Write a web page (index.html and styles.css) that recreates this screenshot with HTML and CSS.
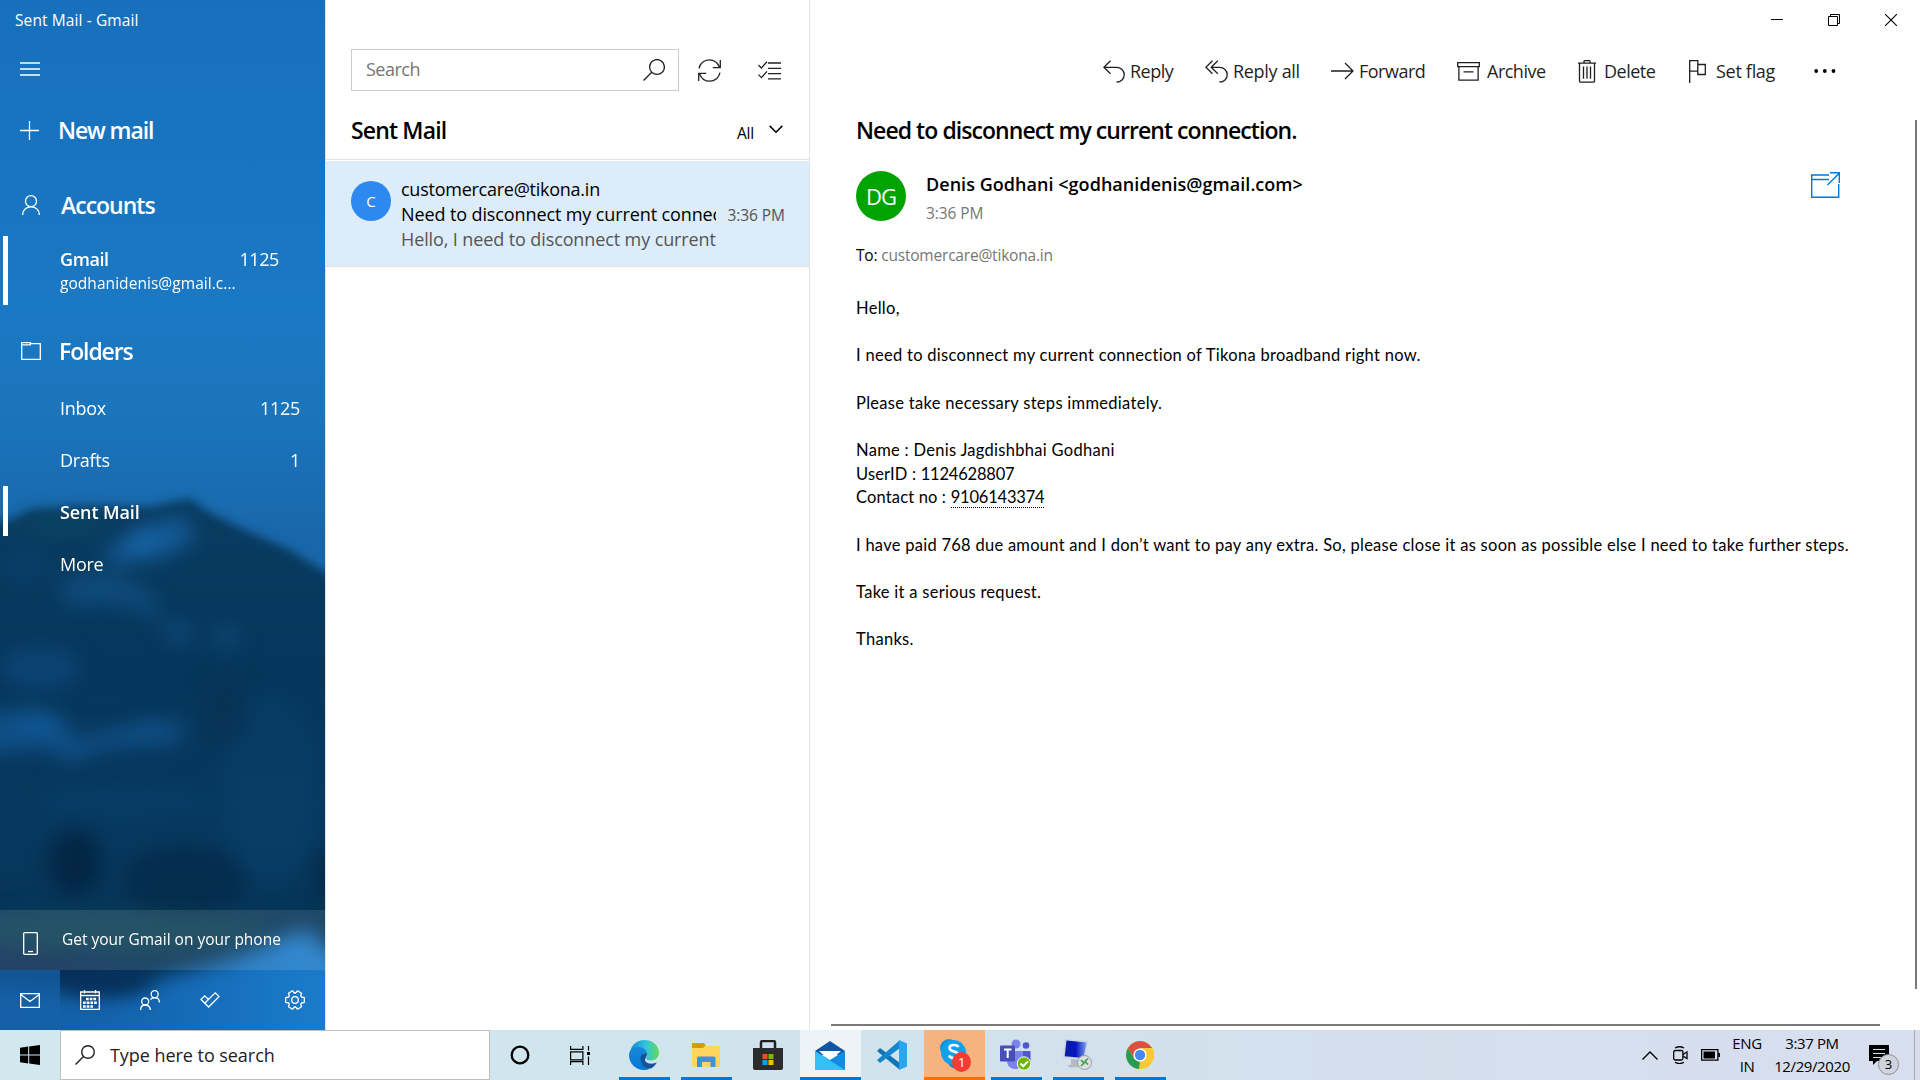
FILE: index.html
```html
<!DOCTYPE html>
<html lang="en">
<head>
<meta charset="utf-8">
<title>Sent Mail - Gmail</title>
<link rel="stylesheet" href="styles.css">
</head>
<body>
<div class="desktop">
  <div class="window">
    <aside class="sidebar">
      <svg class="wallpaper" viewBox="0 0 325 1030" preserveAspectRatio="none" aria-hidden="true">
        <defs>
          <linearGradient id="sky" x1="0" y1="0" x2="0" y2="1"><stop offset="0" stop-color="#1770bc"/><stop offset=".3" stop-color="#1b78c3"/><stop offset=".4" stop-color="#1b75bc"/><stop offset=".52" stop-color="#1967aa"/></linearGradient>
          <linearGradient id="rock" x1="0" y1="0" x2="0" y2="1"><stop offset="0" stop-color="#093c60"/><stop offset=".3" stop-color="#06365b"/><stop offset=".6" stop-color="#07385e"/><stop offset="1" stop-color="#042d4c"/></linearGradient>
          <linearGradient id="water" x1="0" y1="0" x2="1" y2="0"><stop offset="0" stop-color="#10599b"/><stop offset=".5" stop-color="#1568b3"/><stop offset=".85" stop-color="#1a7bca"/><stop offset="1" stop-color="#1976c4"/></linearGradient>
          <filter id="soft" filterUnits="userSpaceOnUse" x="-100" y="400" width="525" height="750" color-interpolation-filters="sRGB"><feGaussianBlur stdDeviation="5"/></filter>
          <filter id="haze" filterUnits="userSpaceOnUse" x="-100" y="400" width="525" height="750" color-interpolation-filters="sRGB"><feGaussianBlur stdDeviation="10"/></filter>
        </defs>
        <rect width="325" height="1030" fill="url(#sky)"/>
        <path d="M-30 526 10 520 32 509 90 506 150 507 176 501 190 499 210 513 245 530 290 550 325 572 360 590V1060H-30Z" fill="url(#rock)" filter="url(#soft)"/>
        <g filter="url(#haze)">
          <path d="M100 558 140 525 187 516 194 540 165 556 120 564Z" fill="#155f9f" opacity=".85"/>
          <ellipse cx="142" cy="543" rx="15" ry="8" fill="#1a6cb4" opacity=".8"/>
          <path d="M60 580 105 570 150 590 165 625 145 612 110 604 65 606Z" fill="#12568d" opacity=".6"/>
          <ellipse cx="65" cy="524" rx="45" ry="9" fill="#0b4c66" opacity=".6"/>
          <ellipse cx="25" cy="565" rx="24" ry="16" fill="#0b477a" opacity=".4"/>
          <ellipse cx="178" cy="633" rx="14" ry="11" fill="#115187" opacity=".7"/>
          <ellipse cx="226" cy="637" rx="16" ry="13" fill="#104c7c" opacity=".6"/>
          <ellipse cx="40" cy="668" rx="42" ry="22" fill="#114f8b" opacity=".5"/>
          <path d="M-40 715 30 708 62 716 74 738 110 730 145 720 190 724 172 746 150 744 110 748 70 762 40 748-40 758Z" fill="#115794" opacity=".75"/>
          <ellipse cx="40" cy="724" rx="18" ry="8" fill="#1261a6" opacity=".7"/>
          <ellipse cx="270" cy="790" rx="50" ry="95" fill="#09416e" opacity=".5"/>
          <ellipse cx="225" cy="712" rx="26" ry="36" fill="#063052" opacity=".6"/>
          <ellipse cx="125" cy="802" rx="90" ry="15" fill="#0b4470" opacity=".4"/>
          <ellipse cx="75" cy="862" rx="26" ry="33" fill="#02203c" opacity=".75"/>
          <ellipse cx="185" cy="880" rx="62" ry="34" fill="#042747" opacity=".65"/>
          <ellipse cx="328" cy="875" rx="14" ry="28" fill="#042846" opacity=".8"/>
          <ellipse cx="120" cy="930" rx="150" ry="20" fill="#0c4353" opacity=".7"/>
          <ellipse cx="20" cy="966" rx="90" ry="12" fill="#0b2c54"/>
        </g>
        <path d="M-50 985 60 990 120 990 160 978 220 962 260 948 285 936 308 930 330 952 380 975V1080H-50Z" fill="url(#water)" filter="url(#haze)"/>
        <ellipse cx="105" cy="980" rx="48" ry="16" fill="#07315c" filter="url(#haze)"/>
      </svg>
      <div class="window-title"><span>Sent Mail - Gmail</span></div>
      <div class="side-row menu-row"><svg class="ic" width="20" height="14" viewBox="0 0 20 14"><path d="M0 1h20M0 7h20M0 13h20" stroke-width="1.4"/></svg></div>
      <div class="side-row compose"><svg class="ic" width="19" height="19" viewBox="0 0 19 19"><path d="M9.5 0v19M0 9.5h19" stroke-width="1.3"/></svg><span class="big new-mail">New mail</span></div>
      <div class="side-row accounts"><svg class="ic" width="18" height="20" viewBox="0 0 18 20"><circle cx="9" cy="6.2" r="5.5"/><path d="M.6 20c0-4.800 3.500-8.200 8.400-8.200s8.400 3.400 8.400 8.200"/></svg><span class="big accounts-label">Accounts</span></div>
      <div class="account selected">
        <div class="account-line"><b>Gmail</b><span class="num">1125</span></div>
        <div class="account-mail">godhanidenis@gmail.c...</div>
      </div>
      <div class="side-row folders"><svg class="ic" width="20" height="18" viewBox="0 0 20 18"><path d="M.7.700h8.600v2.200H.7zM9.300 1.600h10v15.700H.7V1"/></svg><span class="big folders-label">Folders</span></div>
      <nav>
        <div class="folder"><span>Inbox</span><span class="num">1125</span></div>
        <div class="folder"><span>Drafts</span><span class="num">1</span></div>
        <div class="folder selected"><b>Sent Mail</b></div>
        <div class="folder"><span>More</span></div>
      </nav>
      <div class="promo"><svg class="ic" width="15" height="23" viewBox="0 0 15 23"><rect x=".7" y=".7" width="13.600" height="21.600" rx=".8"/><path d="M5 19.500h5"/></svg><span>Get your Gmail on your phone</span></div>
      <div class="tabs">
        <div class="tab active"><svg class="ic" width="20" height="15" viewBox="0 0 20 15"><path d="M.7.700h18.600v13.600H.7zM.7 1.500 10 8.500l9.300-7"/></svg></div>
        <div class="tab"><svg class="ic" width="20" height="20" viewBox="0 0 20 20"><path d="M.7 2h18.600v17.300H.7zM.7 5.500h18.600M4.500 0v3.500M15.500 0v3.500"/><path d="M6 9h11M3 12.800h14M3 16.500h10" stroke-width="2.500" stroke-dasharray="2.700 1"/></svg></div>
        <div class="tab"><svg class="ic" width="20" height="20" viewBox="0 0 20 20"><circle cx="14.700" cy="4.200" r="3.500"/><circle cx="5.200" cy="11.500" r="3.500"/><path d="M.6 20c0-3 1.900-5 4.600-5s4.800 2 5.300 5M10.500 9.500c1-1.300 2.400-1.900 4.200-1.900 2.700 0 4.700 2 4.700 5"/></svg></div>
        <div class="tab"><svg class="ic" width="20" height="16" viewBox="0 0 20 16"><path d="m1 7.500 3.700-3.700 3.700 3.700L15.200.9 19 4.600 8.600 15zM4.800 11.200l3.600-3.700"/></svg></div>
        <div class="tab settings"><svg class="ic" width="20" height="20" viewBox="0 0 20 20"><circle cx="10" cy="10" r="3.300"/><path d="M19.300 7.700v4.600L16.400 13l-.7 1 .8 2.800-3.900 2.400-2-2.200H9.400l-2 2.200-3.900-2.400.8-2.800-.6-1-3-.7V7.700l3-.7.6-1-.8-2.800L7.400.8l2 2.200h1.200l2-2.200 3.900 2.400-.8 2.800.7 1z" stroke-linejoin="round"/></svg></div>
      </div>
    </aside>

    <section class="list-pane">
      <div class="search-row">
        <div class="search-box"><span>Search</span><svg class="ic" width="22" height="22" viewBox="0 0 22 22"><circle cx="14" cy="8" r="7.400"/><path d="M8.700 13.300.5 21.500"/></svg></div>
        <svg class="ic refresh" width="23" height="23" viewBox="0 0 23 23"><path d="M1 9.300C2 4.500 6 .8 11.300.8c4.700 0 8.300 2.500 10.200 7.500M22.300 1v7.700h-7.500M22 13.700c-1 4.800-5 8.500-10.300 8.500-4.700 0-8.300-2.500-10.200-7.500M.7 22v-7.700h7.500"/></svg>
        <svg class="ic" width="23" height="19" viewBox="0 0 23 19"><path d="M10 2h13M10 7.300h13M10 12.600h13M10 17.900h13M.4 4l3 3L9 .8M.4 13.600l3 3L9 10.400"/></svg>
      </div>
      <div class="list-head"><h2>Sent Mail</h2><span class="all">All</span><svg class="ic" width="14" height="9" viewBox="0 0 14 9"><path d="m.7.900 6.300 6.300L13.300.9" stroke-width="1.500"/></svg></div>
      <article class="mail-item">
        <div class="avatar small">C</div>
        <div class="mail-copy">
          <div class="from">customercare@tikona.in</div>
          <div class="subj">Need to disconnect my current connec</div>
          <div class="prev">Hello, I need to disconnect my current</div>
        </div>
        <time>3:36 PM</time>
      </article>
    </section>

    <main class="reader">
      <div class="controls">
        <span><svg class="ic" width="12" height="12" viewBox="0 0 12 12"><path d="M0 5.500h12" stroke-width="1"/></svg></span>
        <span><svg class="ic" width="12" height="12" viewBox="0 0 12 12"><path d="M.5 2.500h9v9h-9zM2.500 2.500v-2h9v9h-2" stroke-width="1"/></svg></span>
        <span><svg class="ic" width="12" height="12" viewBox="0 0 12 12"><path d="m0 0 12 12M12 0 0 12" stroke-width="1.100"/></svg></span>
      </div>
      <div class="toolbar">
        <div class="cmd reply"><svg class="ic" width="22" height="23" viewBox="0 0 22 23"><path d="M7.500.7.9 7.300l6.600 6.500M1 7.300h12.500c4.500 0 7.700 3.200 7.700 7.400 0 4.300-3.200 7.300-7.700 7.300"/></svg><span>Reply</span></div>
        <div class="cmd reply-all"><svg class="ic" width="23" height="23" viewBox="0 0 23 23"><path d="M7.500.700.9 7.300l6.600 6.500M12.800.700 6.200 7.300l6.600 6.500M6.200 7.300h8.300c4.500 0 7.700 3.200 7.700 7.400 0 4.300-3.200 7.300-7.700 7.300"/></svg><span>Reply all</span></div>
        <div class="cmd forward"><svg class="ic" width="23" height="23" viewBox="0 0 23 23"><path d="M0 11h22M14 3l8 8-8 8"/></svg><span>Forward</span></div>
        <div class="cmd archive"><svg class="ic" width="23" height="19" viewBox="0 0 23 19"><path d="M.7.700h21.600v4H.7zM1.900 4.700h19.200v13.400H1.900zM6.500 9.800h10"/></svg><span>Archive</span></div>
        <div class="cmd delete"><svg class="ic" width="18" height="23" viewBox="0 0 18 23"><path d="M0 3.200h18M1.500 3.200V21q0 1.200 1.200 1.200h12.600q1.200 0 1.200-1.200V3.200M6 3V1.600Q6 .6 7 .6h4q1 0 1 1V3M5.500 6.500v12.300M9 6.500v12.300M12.500 6.500v12.300"/></svg><span>Delete</span></div>
        <div class="cmd flag"><svg class="ic" width="17" height="23" viewBox="0 0 17 23"><path d="M.7 23V.700h8.100v10.500H.7M8.800 4.500h7.500v10H8.800v-3.300"/></svg><span>Set flag</span></div>
        <div class="cmd more"><svg width="22" height="4" viewBox="0 0 22 4"><circle cx="2.200" cy="2" r="1.900"/><circle cx="10.800" cy="2" r="1.900"/><circle cx="19.500" cy="2" r="1.900"/></svg></div>
      </div>
      <h1>Need to disconnect my current connection.</h1>
      <div class="sender">
        <div class="avatar large">DG</div>
        <div class="who"><div class="name">Denis Godhani &lt;godhanidenis@gmail.com&gt;</div><div class="when">3:36 PM</div></div>
        <svg class="popout" width="29" height="26" viewBox="0 0 29 26"><path d="M18 3H.7v22.300h27V12M.7 7.500H18M16.500 13 28 1.500M19 .7h9.300V11"/></svg>
      </div>
      <div class="to">To: <span>customercare@tikona.in</span></div>
      <div class="letter">
        <p>Hello,</p>
        <p>I need to disconnect my current connection of Tikona broadband right now.</p>
        <p>Please take necessary steps immediately.</p>
        <p>Name : Denis Jagdishbhai Godhani<br><span class="label">UserID :</span> <span class="digits">1124628807</span><br><span class="label">Contact no :</span> <span class="digits phone">9106143374</span></p>
        <p class="long">I have paid 768 due amount and I don’t want to pay any extra. So, please close it as soon as possible else I need to take further steps.</p>
        <p>Take it a serious request.</p>
        <p>Thanks.</p>
      </div>
      <div class="scroll-v"></div>
      <div class="scroll-h"></div>
    </main>
  </div>

  <footer class="taskbar">
    <div class="start"><svg width="20" height="20" viewBox="0 0 20 20"><path d="M0 2.700 8.200 1.600v7.900H0zM9.200 1.400 20 0v9.500H9.200zM0 10.500h8.200v7.900L0 17.300zM9.200 10.500H20V20L9.200 18.600z"/></svg></div>
    <div class="task-search"><svg class="ic" width="20" height="20" viewBox="0 0 20 20"><circle cx="13" cy="7" r="6.300" stroke-width="1.400"/><path d="M8.500 11.500.5 19.500" stroke-width="1.400"/></svg><span>Type here to search</span></div>
    <div class="slot cortana"><svg class="ic" width="20" height="20" viewBox="0 0 20 20"><circle cx="10" cy="10" r="8.300" stroke-width="2.300"/></svg></div>
    <div class="slot taskview"><svg class="ic" width="20" height="19" viewBox="0 0 20 19"><path d="M.6 0v3.400h12.300V0M.6 5.800h12.300v8H.6zM.6 19v-3.300h12.300V19M18.500 0v4.500M18.500 10.500V19" stroke-width="1.200"/><path d="M17 6h3v3h-3z" fill="#000" stroke="none"/></svg></div>
    <div class="apps">
      <div class="slot running"><svg width="30" height="30" viewBox="0 0 30 30"><defs><linearGradient id="e1"><stop stop-color="#1687da"/><stop offset=".55" stop-color="#31c5dc"/><stop offset="1" stop-color="#63db54"/></linearGradient><linearGradient id="e2" x2="0" y2="1"><stop stop-color="#1689d8"/><stop offset="1" stop-color="#0876d5"/></linearGradient></defs><path d="M1 13C2 5 8 0 15.500 0 24 0 30 6 30 12.500c0 5-3.500 8-8 8-3 0-5-1-5-2.300 0-.7 1.100-1.300 1.100-3.300C18.100 11 14 8 9.500 8 5 8 2 10 1 13" fill="url(#e1)"/><path d="M0 15c0-5 4-8 9.500-8 4.500 0 8.600 3 8.600 7-4-2-6 1-6 4.500 0 4.500 4 9 9 10-2 1-4 1.500-6 1.500C6 30 0 23 0 15" fill="url(#e2)"/><path d="M18 13.500c-4-1-6.500 1.500-6.500 5 0 5.500 4.500 10.500 10.500 10 2.500-1.500 5-4 6-6.500-1.500 1-4 1.800-6.500 1.600-4-.3-6.600-3-5-5.400 1.100-1.500 1.500-2.700 1.500-4.700" fill="#135398"/></svg></div>
      <div class="slot running"><svg width="28" height="24" viewBox="0 0 28 24"><path d="M0 0h12l2 3-2 3H0z" fill="#dc9a00"/><path d="M0 5h11l2-2h15v21H0z" fill="#ffd55d"/><path d="M5 24v-9q0-1.500 1.500-1.500h15.500q1.500 0 1.500 1.500v9h-5v-5h-8.500v5z" fill="#3e93df"/></svg></div>
      <div class="slot"><svg width="30" height="30" viewBox="0 0 30 30"><path d="M8 8V2.500Q8 1 9.500 1h11Q22 1 22 2.500V8" fill="none" stroke="#222" stroke-width="2.500"/><path d="M0 8h30v20q0 2-2 2H2q-2 0-2-2z" fill="#2c2c2c"/><path d="M9.500 14h5v5h-5z" fill="#f25022"/><path d="M15.500 14h5v5h-5z" fill="#7fba00"/><path d="M9.500 20h5v5h-5z" fill="#00a4ef"/><path d="M15.500 20h5v5h-5z" fill="#ffb900"/></svg></div>
      <div class="slot running current"><svg width="30" height="29" viewBox="0 0 30 29"><path d="M0 10 15 0l15 10v4H0z" fill="#0d57a5"/><path d="M4 10h22L15 20z" fill="#fff"/><path d="M0 10l15 9 15-9v19H0z" fill="#1a9bea"/><path d="M0 10 30 29H0z" fill="#30c2f5"/><path d="M15 19.200 30 10v19z" fill="#168bdc"/></svg></div>
      <div class="slot"><svg width="30" height="30" viewBox="0 0 30 30"><path d="m0 11 3-3 20 15v7z" fill="#0f74b8"/><path d="m0 20 3 3L23 8V0z" fill="#1686ce"/><path d="m22 0 8 3.500v23L22 30z" fill="#29a5f1"/></svg></div>
      <div class="slot running alert"><svg width="31" height="36" viewBox="0 0 31 36"><circle cx="9" cy="11" r="9" fill="#0e92dd"/><circle cx="17" cy="22" r="10" fill="#0b86d2"/><circle cx="13.500" cy="15.500" r="12.500" fill="#12a0ec"/><path d="M18.500 10C17 7.500 9.500 7 9.500 11c0 4.500 9 2.500 9 7 0 4-8 4-9.500.5" fill="none" stroke="#fff" stroke-width="2.600"/><ellipse cx="21.500" cy="25" rx="9.500" ry="10" fill="#f23d35"/></svg><span class="alert-count">1</span></div>
      <div class="slot running"><svg width="31" height="32" viewBox="0 0 31 32"><circle cx="16" cy="5" r="4.500" fill="#7b83eb"/><circle cx="26" cy="6.500" r="3.300" fill="#5059c9"/><path d="M20 12h10.500v11q-2 4-6 3z" fill="#5059c9"/><path d="M7 12h16v10c0 5-4 8-8 8s-8-3-8-8z" fill="#7b83eb"/><rect y="6.500" width="15" height="16" rx="1" fill="#464eb8"/><path d="M4 10.500h7.500M7.700 10.500v8.500" stroke="#fff" stroke-width="2"/><circle cx="24" cy="24.500" r="6.700" fill="#6bb700" stroke="#fff"/><path d="m20.500 24.500 2.700 2.700 4.800-5" stroke="#fff" stroke-width="2" fill="none"/></svg></div>
      <div class="slot running"><svg width="29" height="32" viewBox="0 0 29 32"><defs><linearGradient id="screen"><stop stop-color="#0b20a5"/><stop offset=".5" stop-color="#0714bd"/><stop offset="1" stop-color="#7aa0f0"/></linearGradient></defs><path d="M2 0 25 2 22 21 0 19z" fill="#c9d3e3"/><path d="M3.500 1.500 23.500 3.500 20.500 19 1.700 17.200z" fill="url(#screen)"/><path d="m8 20 8 1-1 5 3 2-11 .5-3-2 4-1z" fill="#b5bac4"/><circle cx="21.500" cy="23.500" r="7" fill="#dcdedf" stroke="#999ea3"/><path d="m18 21 3 3-3 3M25 19.500l-3 3 3 3" fill="none" stroke="#34a24e" stroke-width="1.600"/></svg></div>
      <div class="slot running"><svg width="28" height="28" viewBox="0 0 28 28"><circle cx="14" cy="14" r="14" fill="#fcc934"/><path d="M14 14 8 17.500 1.900 7A14 14 0 0 1 26.100 7H14z" fill="#dd4f43"/><path d="M1.900 7 8 17.500 14 21l-.5 7A14 14 0 0 1 1.900 7" fill="#249b57"/><path d="M14 21 20 10 26.100 7A14 14 0 0 1 13 28z" fill="#fcc934"/><circle cx="14" cy="14" r="6.600" fill="#fff"/><circle cx="14" cy="14" r="5.200" fill="#4688f2"/></svg></div>
    </div>
    <div class="tray">
      <svg class="ic" width="16" height="9" viewBox="0 0 16 9"><path d="m.5 8.500 7.500-7.500 7.500 7.500"/></svg>
      <svg class="ic cam" width="15" height="18" viewBox="0 0 15 18"><rect x=".7" y="4.500" width="9.200" height="9.500" rx="1.500"/><path d="m10 8.500 4-2.500v6.500L10 10M2 2q4.500-2.500 9 0M2 16.300q4.500 2.500 9 0"/></svg>
      <svg class="ic bat" width="19" height="12" viewBox="0 0 19 12"><path d="M.6.600h16.300v10.600H.6zM18.300 4v4"/><path d="M2.500 2.500h11.500v7H2.500z" fill="#000" stroke="none"/></svg>
      <div class="stack lang"><span>ENG</span><span>IN</span></div>
      <div class="stack clock"><span>3:37 PM</span><span>12/29/2020</span></div>
      <div class="notices"><svg width="20" height="20" viewBox="0 0 20 20"><path d="M0 0h20v16H8l-4 4v-4H0z"/><path d="M4 4.500h12M4 8.500h12M4 12.500h8" stroke="#d3dcea" stroke-width="1.200"/></svg><span class="badge">3</span></div>
      <div class="peek"></div>
    </div>
  </footer>
</div>
</body>
</html>
```
FILE: styles.css
```css
* { box-sizing: border-box; }
body { margin: 0; font-family: "Open Sans", "Noto Sans", sans-serif; font-size: 18px; color: #000; background: #fff; }
h1, h2, p { margin: 0; }
b { font-weight: 600; }
svg { display: block; flex: none; }
.ic { fill: none; stroke: currentColor; stroke-width: 1.3; }
.desktop { width: 1920px; height: 1080px; overflow: hidden; display: flex; flex-direction: column; }
.window { height: 1030px; display: flex; }

/* sidebar */
.sidebar { width: 325px; position: relative; display: flex; flex-direction: column; color: #fff; white-space: nowrap; isolation: isolate; overflow: hidden; }
.wallpaper { position: absolute; inset: 0; width: 325px; height: 1030px; z-index: -1; }
.window-title { height: 40px; line-height: 41px; padding-left: 15px; font-size: 15.5px; letter-spacing: .1px; }
.side-row { display: flex; align-items: center; padding-left: 20px; }
.menu-row { height: 58px; }
.compose { height: 64px; margin-bottom: 12px; gap: 19px; }
.accounts { height: 62px; padding-left: 22px; gap: 21px; }
.folders { height: 62px; margin-top: 15px; padding-left: 21px; gap: 18px; }
.big { font-size: 23px; font-weight: 600; letter-spacing: -1.1px; }
.accounts-label { letter-spacing: -1px; }
.account { height: 69px; padding: 11px 46px 0 60px; letter-spacing: -.4px; }
.account-line { display: flex; justify-content: space-between; line-height: 24px; }
.account-mail { font-size: 15.5px; line-height: 24px; letter-spacing: .05px; }
.selected { position: relative; }
.selected::before { content: ""; position: absolute; left: 3px; top: 0; width: 5px; bottom: 0; background: #fff; }
.folder { height: 52px; padding: 0 25px 0 60px; display: flex; align-items: center; justify-content: space-between; letter-spacing: -.3px; }
.folder b { letter-spacing: -.1px; }
.folder.selected::before { bottom: 2px; }
.promo { margin-top: auto; height: 60px; padding-left: 23px; display: flex; align-items: center; gap: 24px; background: rgba(255, 255, 255, .11); font-size: 15.5px; letter-spacing: 0; }
.promo span { margin-top: -2px; }
.promo svg { margin-top: 7px; }
.tabs { height: 60px; display: flex; }
.tab { width: 60px; display: flex; align-items: center; justify-content: center; }
.tab.active { background: rgba(23, 98, 168, .75); }
.settings { margin-left: 25px; }

/* message list */
.list-pane { width: 485px; border: solid #e3e3e3; border-width: 0 1px; padding-top: 49px; white-space: nowrap; }
.search-row { height: 42px; padding-left: 25px; display: flex; align-items: center; color: #222; }
.search-box { width: 328px; height: 42px; border: 1px solid #ccc; padding: 0 13px 0 14px; display: flex; align-items: center; justify-content: space-between; }
.search-box span { color: #767676; letter-spacing: -.5px; margin-top: -2px; }
.refresh { margin: 0 37px 0 19px; }
.list-head { height: 69px; padding: 8px 26px 0 25px; border-bottom: 1px solid #e3e3e3; margin-bottom: 1px; display: flex; align-items: center; }
h2 { font-size: 23px; font-weight: 600; letter-spacing: -.85px; flex: 1; padding-top: 2px; }
.all { font-size: 15.5px; letter-spacing: -.2px; margin: 7px 15px 0 0; }
.mail-item { height: 106px; background: #dcecf9; border-bottom: 1px solid #dfdfdf; padding: 16px 24px 0 25px; display: flex; }
.avatar { border-radius: 50%; color: #fff; display: flex; align-items: center; justify-content: center; }
.small { width: 40px; height: 40px; margin: 4px 10px 0 0; background: #2d89ef; font-size: 15px; }
.mail-copy { width: 315px; overflow: hidden; line-height: 25px; letter-spacing: -.11px; }
.from { letter-spacing: -.25px; }
.prev { color: #555; }
.mail-item time { margin-left: auto; line-height: 25px; margin-top: 26px; font-size: 15.5px; letter-spacing: -.05px; color: #555; }

/* reading pane */
.reader { width: 1110px; position: relative; white-space: nowrap; }
.controls { height: 40px; padding-right: 1px; display: flex; justify-content: flex-end; }
.controls span { width: 57px; display: flex; align-items: center; justify-content: center; }
.toolbar { height: 62px; padding-left: 293px; display: grid; grid-template-columns: 102px 126px 126px 121px 111px 125px 60px; color: #1f1f1f; letter-spacing: -.5px; }
.cmd { display: flex; align-items: center; gap: 5px; }
.reply-all { letter-spacing: -.3px; }
.archive { gap: 7px; }
.delete { gap: 8px; }
.flag { gap: 10px; letter-spacing: -.3px; }
h1 { font-size: 23px; font-weight: 600; letter-spacing: -.94px; line-height: 48px; margin: 4px 0 0 46px; }
.sender { margin: 17px 0 0 46px; display: flex; height: 50px; }
.large { width: 50px; height: 50px; background: #00a300; font-size: 22px; letter-spacing: -1px; }
.who { margin-left: 20px; width: 885px; }
.name { font-weight: 600; line-height: 26px; letter-spacing: .04px; }
.when { font-size: 15.5px; line-height: 24px; margin-top: 4px; color: #767676; letter-spacing: -.1px; }
.popout { fill: none; stroke: #0078d7; stroke-width: 1.400; margin-top: 1px; }
.to { margin: 22px 0 0 46px; line-height: 24px; font-size: 15.5px; letter-spacing: -.2px; }
.to span { color: #767676; }
.letter { margin: 30px 0 0 46px; font: 16.5px/23.67px Lato, sans-serif; letter-spacing: .29px; }
.letter p { margin-bottom: 23.67px; }
.letter .long { letter-spacing: .27px; }
.label { letter-spacing: .15px; }
.digits { letter-spacing: -.2px; }
.phone { border-bottom: 1px dotted #000; }
.scroll-v { position: absolute; right: 3px; top: 120px; width: 2px; height: 869px; background: #7a7a7a; }
.scroll-h { position: absolute; left: 21px; top: 1024px; width: 1049px; height: 2px; background: #7a7a7a; }

/* taskbar */
.taskbar { height: 50px; display: flex; background: linear-gradient(90deg, #d1e8ee 0, #d0e5ed 32%, #d3e0ed 65%, #d8deee 100%); white-space: nowrap; }
.start { width: 60px; display: flex; align-items: center; justify-content: center; }
.task-search { width: 430px; border: 1px solid #bfbfbf; background: #fff; height: 50px; padding-left: 14px; display: flex; align-items: center; gap: 15px; color: #222; letter-spacing: -.05px; }
.slot { position: relative; width: 61px; display: flex; align-items: center; justify-content: center; }
.slot svg { margin-right: 2px; }
.slot.taskview { width: 58px; margin-right: 5px; }
.taskview svg { margin-right: 0; }
.apps { display: flex; gap: 1px; }
.running::after { content: ""; position: absolute; left: 5px; right: 5px; bottom: 0; height: 3px; background: #0078d7; }
.current, .alert { background: #ecf4f8; }
.alert { background: #f6b37d; }
.current::after, .alert::after { left: 0; right: 0; }
.alert::after { background: #f97000; }
.alert svg { margin: 0 -1px 0 0; }
.alert-count { position: absolute; left: 34px; top: 24px; font-size: 13px; line-height: 16px; color: #fff; }
.tray { margin-left: auto; display: flex; align-items: center; font-size: 15px; }
.cam { margin-left: 15px; }
.bat { margin-left: 13px; }
.stack { display: flex; flex-direction: column; align-items: center; line-height: 23px; margin-top: -1px; letter-spacing: -.4px; }
.lang { width: 40px; margin-left: 7px; }
.clock { width: 90px; }
.notices { position: relative; margin-left: 12px; width: 20px; }
.badge { position: absolute; left: 9px; top: 9px; width: 21px; height: 21px; border: 1px solid #8b8f96; border-radius: 50%; background: #cfd4dd; font-size: 13px; line-height: 19px; text-align: center; }
.peek { width: 6px; height: 50px; margin-left: 25px; border-left: 1px solid #a3a9b5; }
```
